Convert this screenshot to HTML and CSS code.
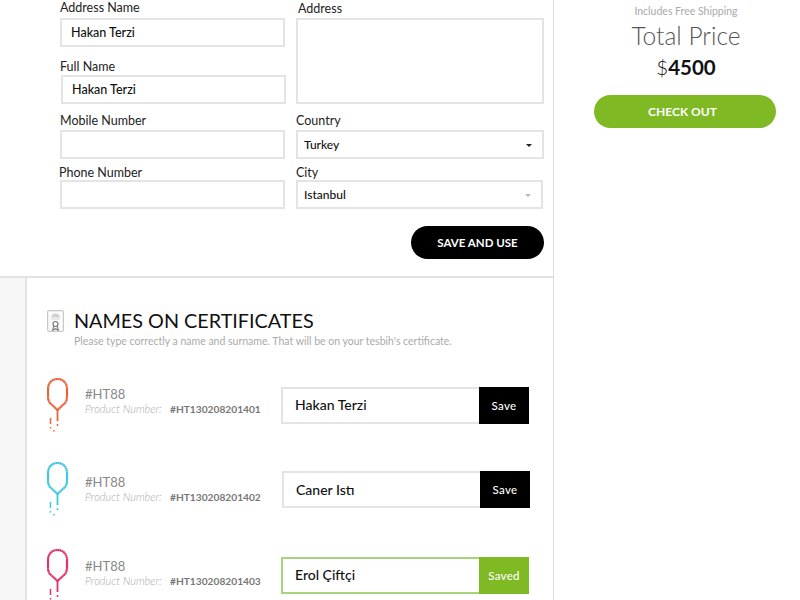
FILE: index.html
```html
<!DOCTYPE html>
<html lang="en">
<head>
<meta charset="utf-8">
<title>Checkout</title>
<link rel="stylesheet" href="styles.css">
</head>
<body>
<div class="page">
  <main class="main">
    <section class="address">
      <div class="fields">
        <div class="col col-left">
          <label class="field f-name"><span class="label">Address Name</span><span class="input">Hakan Terzi</span></label>
          <label class="field f-full"><span class="label">Full Name</span><span class="input">Hakan Terzi</span></label>
          <label class="field f-mobile"><span class="label">Mobile Number</span><span class="input"></span></label>
          <label class="field f-phone"><span class="label">Phone Number</span><span class="input"></span></label>
        </div>
        <div class="col col-right">
          <label class="field f-address"><span class="label">Address</span><span class="input textarea"></span></label>
          <label class="field f-country"><span class="label">Country</span><span class="input select">Turkey<i class="caret"></i></span></label>
          <label class="field f-city"><span class="label">City</span><span class="input select">Istanbul<i class="caret caret-muted"></i></span></label>
        </div>
      </div>
      <div class="actions"><button class="btn-save-use">SAVE AND USE</button></div>
    </section>
    <section class="certs">
      <div class="rail"></div>
      <div class="certs-body">
        <header class="certs-head">
          <svg class="cert-icon" width="17" height="22" viewBox="0 0 17 22">
            <rect x="0.6" y="0.6" width="15.8" height="20.8" rx="1.5" fill="#fafafa" stroke="#c8c8c8" stroke-width="1.2"/>
            <path d="M4 7.5a4.5 4 0 0 1 9 0z" fill="#d0d0d0"/>
            <rect x="4" y="8.5" width="9" height="1.2" fill="#dedede"/>
            <circle cx="8.5" cy="14" r="2.5" fill="none" stroke="#777" stroke-width="1.2"/>
            <path d="M6.7 16.4l-1 3.8 2.8-1.5 2.8 1.5-1-3.8" fill="none" stroke="#777" stroke-width="1.1"/>
          </svg>
          <div class="head-text">
            <h2 class="certs-title">NAMES ON CERTIFICATES</h2>
            <p class="certs-sub">Please type correctly a name and surname. That will be on your tesbih's certificate.</p>
          </div>
        </header>
        <div class="row row-1">
          <svg class="beads beads-orange" width="22" height="56" viewBox="0 0 22 56">
            <path class="loop" d="M10.5 32L3.5 25.5C1.5 23.5 1 21 1 18V11C1 5 5 1 10.5 1S20 5 20 11V18C20 21 19.5 23.5 17.5 25.5Z"/>
            <path class="stem" d="M10.5 32V43"/>
            <path class="tail" d="M3.5 40V46M3.5 49V50.5M10.5 46V48M7 52V53.5"/>
          </svg>
          <div class="product">
            <div class="sku">#HT88</div>
            <div class="pn"><em>Product Number:</em><b>#HT130208201401</b></div>
          </div>
          <div class="name-box"><span class="name-input">Hakan Terzi</span><button class="name-btn">Save</button></div>
        </div>
        <div class="row row-2">
          <svg class="beads beads-cyan" width="22" height="56" viewBox="0 0 22 56">
            <path class="loop" d="M10.5 32L3.5 25.5C1.5 23.5 1 21 1 18V11C1 5 5 1 10.5 1S20 5 20 11V18C20 21 19.5 23.5 17.5 25.5Z"/>
            <path class="stem" d="M10.5 32V43"/>
            <path class="tail" d="M3.5 40V46M3.5 49V50.5M10.5 46V48M7 52V53.5"/>
          </svg>
          <div class="product">
            <div class="sku">#HT88</div>
            <div class="pn"><em>Product Number:</em><b>#HT130208201402</b></div>
          </div>
          <div class="name-box"><span class="name-input">Caner Istı</span><button class="name-btn">Save</button></div>
        </div>
        <div class="row row-3">
          <svg class="beads beads-pink" width="22" height="56" viewBox="0 0 22 56">
            <path class="loop" d="M10.5 32L3.5 25.5C1.5 23.5 1 21 1 18V11C1 5 5 1 10.5 1S20 5 20 11V18C20 21 19.5 23.5 17.5 25.5Z"/>
            <path class="stem" d="M10.5 32V43"/>
            <path class="tail" d="M3.5 40V46M3.5 49V50.5M10.5 46V48M7 52V53.5"/>
          </svg>
          <div class="product">
            <div class="sku">#HT88</div>
            <div class="pn"><em>Product Number:</em><b>#HT130208201403</b></div>
          </div>
          <div class="name-box saved"><span class="name-input">Erol Çiftçi</span><button class="name-btn">Saved</button></div>
        </div>
      </div>
    </section>
  </main>
  <aside class="summary">
    <p class="shipping">Includes Free Shipping</p>
    <p class="total-label">Total Price</p>
    <p class="total-value"><span class="cur">$</span>4500</p>
    <button class="btn-checkout">CHECK OUT</button>
  </aside>
</div>
</body>
</html>
```
FILE: styles.css
```css
* { box-sizing: border-box; }
html, body { margin: 0; padding: 0; background: #fff; }
body { width: 800px; height: 600px; overflow: hidden; font-family: Lato, "Noto Sans", sans-serif; color: #111; }
.page { display: flex; height: 600px; }
.main { width: 554px; height: 600px; border-right: 1px solid #dcdcdc; display: flex; flex-direction: column; }

.address { height: 278px; border-bottom: 2px solid #e2e2e2; padding-left: 60px; flex: none; }
.fields { display: flex; gap: 11px; }
.col { display: flex; flex-direction: column; }
.col-left { width: 225px; }
.col-right { width: 248px; }
.field { display: block; }
.label { display: block; font-size: 12.5px; line-height: 14px; color: #222; }
.input { display: block; height: 29px; border: 2px solid #e4e4e4; padding: 0 9px; font-size: 12.5px; line-height: 25px; font-weight: 500; color: #111; background: #fff; }
.f-name .label { margin-top: 1px; margin-bottom: 3px; }
.f-full { margin-top: 12px; margin-left: 1px; margin-right: -1px; }
.f-full .label { margin: 1px 0 1px -1px; }
.f-mobile { margin-top: 9px; }
.f-mobile .label { margin: 1px 0 2px; }
.f-phone { margin-top: 6px; }
.f-phone .label { margin: 1px 0 0 -1px; }
.f-address .label { margin: 2px 0 2px 2px; }
.f-address .textarea { height: 86px; }
.f-country { margin-top: 9px; }
.f-country .label { margin: 1px 0 2px; }
.f-city { margin-top: 6px; }
.f-city .label { margin: 1px 0 0; }
.f-city .input { margin-right: 1px; }
.select { display: flex; justify-content: space-between; align-items: center; font-size: 12px; line-height: 1; padding-left: 6px; padding-right: 10px; }
.caret { width: 0; height: 0; margin-top: 1px; border-left: 3px solid transparent; border-right: 3px solid transparent; border-top: 3px solid #222; }
.caret-muted { border-top-color: #b5b5b5; }

.actions { display: flex; justify-content: flex-end; padding-right: 9px; margin-top: 17px; }
.btn-save-use { width: 133px; height: 33px; border: 0; border-radius: 17px; background: #000; color: #fff; font: 700 11.5px Lato, sans-serif; }

.certs { flex: 1; display: flex; min-height: 0; }
.rail { width: 27px; background: #f7f7f7; border-right: 2px solid #e4e4e4; flex: none; }
.certs-body { flex: 1; padding-left: 20px; }
.certs-head { display: flex; padding-top: 32px; gap: 10px; }
.cert-icon { flex: none; }
.head-text { margin-top: -2px; }
.certs-title { margin: 0; font-size: 19.8px; line-height: 24px; font-weight: 400; color: #111; }
.certs-sub { margin: 3px 0 0; font-size: 10.5px; line-height: 13px; color: #aaa; }
.row { display: flex; align-items: flex-start; }
.beads { flex: none; fill: none; }
.loop { stroke-width: 2.2; stroke-dasharray: 1.8 .2; }
.stem { stroke-width: 1.8; }
.tail { stroke-width: 1.5; }
.beads-orange { stroke: #e8643c; }
.beads-cyan { stroke: #3dc8de; }
.beads-pink { stroke: #e0316b; }
.row-1 { margin-top: 30px; }
.row-2 { margin-top: 28px; }
.row-3 { margin-top: 31px; }
.product { width: 196px; margin-left: 16px; padding-top: 9px; flex: none; }
.row-2 .product { padding-top: 13px; }
.row-3 .product { padding-top: 10px; }
.sku { font-size: 13px; line-height: 14px; color: #888; }
.pn { font-size: 10.2px; line-height: 15px; display: flex; align-items: baseline; }
.pn em { width: 85px; flex: none; color: #aaa; font-size: 11px; font-style: italic; font-weight: 300; }
.pn b { color: #777; font-weight: 700; }
.name-box { display: flex; width: 248px; height: 37px; border: 2px solid #e4e4e4; margin-top: 9px; }
.row-2 .name-box { margin-left: 1px; }
.row-3 .name-box { margin-top: 8px; }
.name-input { flex: 1; padding-left: 12px; font-size: 14px; line-height: 32px; font-weight: 500; color: #111; }
.row-2 .name-input { line-height: 33px; }
.name-btn { width: 50px; margin: -2px -2px -2px 0; border: 0; background: #000; color: #fff; font: 500 11.5px Lato, sans-serif; letter-spacing: .3px; }
.saved { border-color: #a9d37a; }
.saved .name-btn { background: #7fb924; }

.summary { flex: 1; display: flex; flex-direction: column; align-items: center; padding: 5px 0 0 18px; }
.shipping { margin: 0; font-size: 10.5px; line-height: 13px; color: #aaa; }
.total-label { margin: 4px 0 0; font-size: 24.5px; line-height: 28px; font-weight: 300; color: #555; }
.total-value { margin: 5px 0 0; font-size: 20.5px; line-height: 24px; font-weight: 700; color: #111; }
.cur { font-weight: 300; }
.btn-checkout { width: 182px; height: 33px; margin: 16px 0 0 -2px; padding: 0 5px 0 0; border: 0; border-radius: 17px; background: #7fb924; color: #fff; font: 700 12px Lato, sans-serif; }
```
